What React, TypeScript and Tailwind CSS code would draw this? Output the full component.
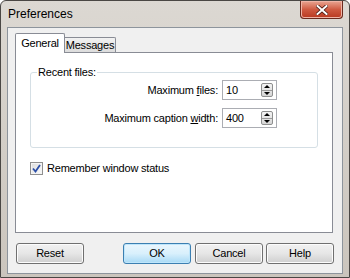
import React from "react";

const font = { fontFamily: '"Liberation Sans", Arial, sans-serif' };

function Spin({ value }: { value: string }) {
  return (
    <div className="flex h-[20px] w-[55px] items-center justify-between border border-[#abadb3] bg-white pl-[3px] pr-[3px]">
      <span className="text-[11px] leading-none tracking-[-0.2px] text-black">{value}</span>
      <div className="flex h-[14px] w-[12px] flex-col overflow-hidden rounded-[2px] border border-[#8e8f8f] bg-gradient-to-b from-[#f4f4f4] to-[#d6d6d6]">
        <div className="flex flex-1 items-center justify-center border-b border-[#9a9a9a]">
          <svg width="6" height="3" viewBox="0 0 6 3">
            <path d="M0 3 L3 0 L6 3 Z" fill="#000" />
          </svg>
        </div>
        <div className="flex flex-1 items-center justify-center">
          <svg width="6" height="3" viewBox="0 0 6 3">
            <path d="M0 0 L6 0 L3 3 Z" fill="#000" />
          </svg>
        </div>
      </div>
    </div>
  );
}

function Btn({ label, primary, className }: { label: string; primary?: boolean; className?: string }) {
  return (
    <button
      type="button"
      className={
        "h-[21px] w-[68px] rounded-[3px] border text-[11px] leading-none tracking-[-0.2px] text-black " +
        (primary
          ? "border-[#3c7fb1] bg-gradient-to-b from-[#eaf6fd] via-[#d9f0fc] to-[#a7d9f5] shadow-[inset_0_0_0_1px_#bfe6fb] "
          : "border-[#707070] bg-gradient-to-b from-[#f2f2f2] via-[#e6e6e6] to-[#cfcfcf] shadow-[inset_0_0_0_1px_#fcfcfc] ") +
        (className ?? "")
      }
    >
      {label}
    </button>
  );
}

export default function App() {
  return (
    <div
      style={font}
      className="flex h-[278px] w-[350px] flex-col overflow-hidden rounded-t-[6px] border border-[#4a4744] bg-gradient-to-b from-[#dcd8d2] via-[#d3cec7] to-[#cbc5bd]"
    >
      {/* title bar */}
      <div className="flex h-[26px] items-start justify-between">
        <span className="pl-[7px] pt-[6px] text-[12px] leading-[14px] text-black">Preferences</span>
        <div className="mr-[6px] flex h-[18px] w-[43px] items-center justify-center rounded-b-[4px] border border-t-0 border-[#6a2a1e] bg-gradient-to-b from-[#e9a593] via-[#cf5a41] to-[#b8381f] shadow-[inset_0_0_0_1px_#f0b4a6]">
          <svg width="12" height="10" viewBox="0 0 12 10">
            <path d="M1.5 1 L10.5 9 M10.5 1 L1.5 9" stroke="#4a1a12" strokeWidth="3.6" strokeLinecap="square" />
            <path d="M1.5 1 L10.5 9 M10.5 1 L1.5 9" stroke="#ffffff" strokeWidth="2" strokeLinecap="square" />
          </svg>
        </div>
      </div>

      {/* client area */}
      <div className="ml-[6px] h-[247px] w-[336px] border border-[#8d949c] bg-[#f0f0f0] pl-[7px] pt-[5px] text-[11px] tracking-[-0.2px]">
        {/* tabs */}
        <div className="flex items-end">
          <div className="relative z-10 -mb-px flex h-[20px] w-[50px] items-start justify-center rounded-t-[2px] border border-b-0 border-[#898c95] bg-white pt-[3px] leading-[13px] text-black">
            General
          </div>
          <div className="flex h-[15px] w-[51px] items-center justify-center rounded-tr-[2px] border border-b-0 border-l-0 border-[#898c95] bg-gradient-to-b from-[#f2f2f2] to-[#dcdcdc] leading-none text-black">
            Messages
          </div>
        </div>

        {/* tab sheet */}
        <div className="h-[181px] w-[318px] border border-[#898c95] bg-white pl-[14px] pt-[19px]">
          <div className="relative h-[76px] w-[288px] rounded-[3px] border border-[#d5dfe5] pr-[40px] pt-[7px]">
            <span className="absolute -top-[7px] left-[6px] bg-white px-px leading-[13px] text-black">
              Recent files:
            </span>
            <div className="flex items-center justify-end gap-[4px]">
              <span className="text-black">
                Maximum <span className="underline">f</span>iles:
              </span>
              <Spin value="10" />
            </div>
            <div className="mt-[8px] flex items-center justify-end gap-[4px]">
              <span className="text-black">
                Maximum caption <span className="underline">w</span>idth:
              </span>
              <Spin value="400" />
            </div>
          </div>

          <div className="mt-[12px] flex items-center gap-[4px]">
            <div className="flex h-[13px] w-[13px] items-center justify-center border border-[#8f8f8f] bg-gradient-to-br from-[#dcdcdc] to-[#fbfbfb] shadow-[inset_0_0_0_1px_#f4f4f4]">
              <svg width="9" height="9" viewBox="0 0 9 9">
                <path d="M1 4.5 L3.5 7.5 L8 1" fill="none" stroke="#2c4fa8" strokeWidth="1.8" />
              </svg>
            </div>
            <span className="text-black">Remember window status</span>
          </div>
        </div>

        {/* buttons */}
        <div className="mt-[10px] flex">
          <Btn label="Reset" className="ml-px" />
          <Btn label="OK" primary className="ml-[39px]" />
          <Btn label="Cancel" className="ml-[4px]" />
          <Btn label="Help" className="ml-[3px]" />
        </div>
      </div>
    </div>
  );
}
